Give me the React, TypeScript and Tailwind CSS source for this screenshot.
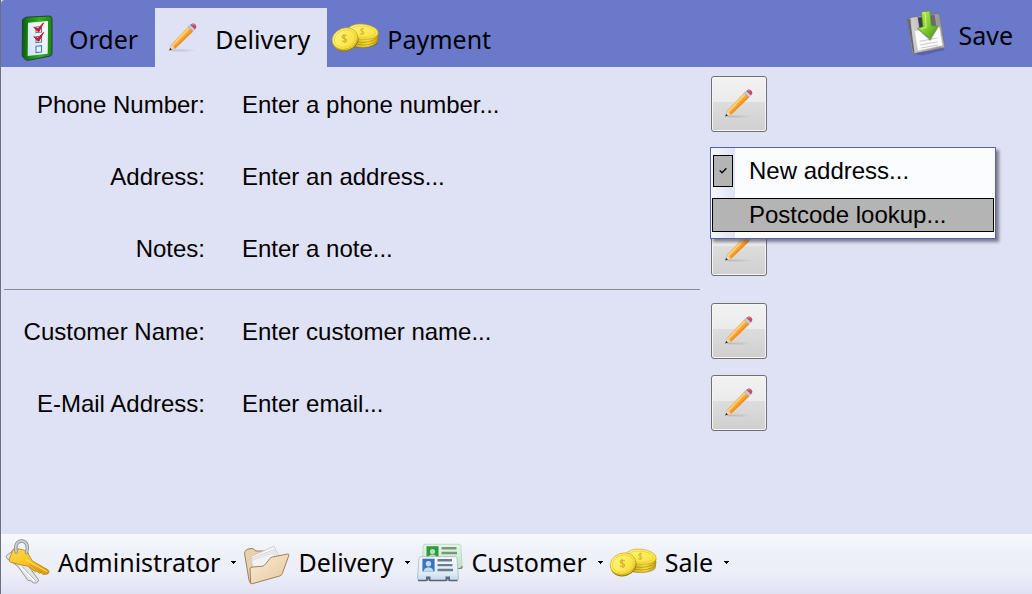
import type { ReactNode } from 'react';

function OrderIcon() {
  return (
    <svg viewBox="0 0 48 48" className="size-12 shrink-0" aria-hidden="true">
      <defs>
        <linearGradient id="order-frame" x1="0" y1="0" x2="1" y2="0">
          <stop offset="0" stopColor="#0c5c0a" />
          <stop offset="0.2" stopColor="#13870f" />
          <stop offset="0.6" stopColor="#2fb313" />
          <stop offset="1" stopColor="#178a10" />
        </linearGradient>
        <linearGradient id="order-page" x1="0" y1="1" x2="1" y2="0">
          <stop offset="0" stopColor="#cfe0f5" />
          <stop offset="1" stopColor="#ffffff" />
        </linearGradient>
      </defs>
      <path d="M9.5 5.5 L13 3.2 L36.5 2 Q39 2.2 39 5 V39.5 Q39 41.8 36.5 42.2 L15 46.3 Q13.5 46.5 12.3 45.4 L9.8 43 Q9.2 42.3 9.2 41 Z" fill="url(#order-frame)" stroke="#33374a" strokeWidth="1" />
      <path d="M15 8.7 L35 7 L34.7 39.7 L14.7 42 Z" fill="url(#order-page)" />
      <g fill="#e8f1fc" stroke="#4f7dc2" strokeWidth="1.1">
        <path d="M23 13 L28.5 12.5 V18 L23 18.7 Z" />
        <path d="M23 22.8 L28.5 22.2 V28 L23 28.6 Z" />
        <path d="M23 32.2 L28.5 31.6 V38 L23 38.6 Z" />
      </g>
      <g fill="#d01822" stroke="#d01822" strokeWidth="1" strokeLinejoin="round">
        <path d="M20.8 13.2 L25 14.8 L30.6 8.8 L26 17.6 L25 17.6 Z" />
        <path d="M20.8 22.7 L25 24.3 L30.6 18.2 L26 27 L25 27 Z" />
      </g>
    </svg>
  );
}

function PencilIcon() {
  return (
    <svg viewBox="0 0 48 48" className="size-12 shrink-0" aria-hidden="true">
      <defs>
        <linearGradient id="pencil-shade" x1="0" y1="0" x2="1" y2="0">
          <stop offset="0" stopColor="#777" stopOpacity="0.35" />
          <stop offset="1" stopColor="#777" stopOpacity="0" />
        </linearGradient>
      </defs>
      <ellipse cx="25" cy="36.5" rx="13" ry="1.2" fill="url(#pencil-shade)" />
      <path d="M10.3 36.4 L12.3 30.8 L16.2 34.5 Z" fill="#f0d9b6" stroke="#bb9c74" strokeWidth="0.4" />
      <path d="M10.2 36.5 L11.2 33.9 L13 35.4 Z" fill="#2b2622" />
      <path d="M12.3 30.8 L29.6 12.6 L31.7 14.5 L14 32.6 Z" fill="#ffd073" />
      <path d="M14 32.3 L31.3 14.2 L34.3 17.1 L16.2 34.5 Z" fill="#fba42f" />
      <path d="M15.5 33.9 L33.5 16.5" stroke="#f08d1b" strokeWidth="1.2" />
      <path d="M12.3 30.8 L29.6 12.6 M16.2 34.5 L34.3 17.1" stroke="#d98e36" strokeWidth="0.5" />
      <path d="M29.4 13 L31.7 10.8 L36 15.1 L33.8 17.3 Z" fill="#b4c3d6" stroke="#8b9bb2" strokeWidth="0.5" />
      <path d="M30.6 12.2 L34.8 16.3" stroke="#dfe8f2" strokeWidth="0.8" />
      <path d="M31.8 10.9 Q33.8 8.6 36.1 10.5 Q38.2 12.8 36 15 Z" fill="#cc4a60" stroke="#b0455a" strokeWidth="0.5" />
      <path d="M33 10.7 Q34.5 9.8 35.6 11" fill="none" stroke="#eb8795" strokeWidth="1" />
    </svg>
  );
}

function CoinsIcon() {
  return (
    <svg viewBox="0 0 48 48" className="size-12 shrink-0" aria-hidden="true">
      <defs>
        <linearGradient id="coin-face" x1="0" y1="0" x2="1" y2="1">
          <stop offset="0" stopColor="#fff68c" />
          <stop offset="0.6" stopColor="#fce84f" />
          <stop offset="1" stopColor="#f1d534" />
        </linearGradient>
        <linearGradient id="coin-edge" x1="0" y1="0" x2="1" y2="0">
          <stop offset="0" stopColor="#b8990f" />
          <stop offset="0.65" stopColor="#f8e03c" />
          <stop offset="1" stopColor="#cbaa14" />
        </linearGradient>
      </defs>
      <ellipse cx="31.5" cy="28.6" rx="15.5" ry="5.5" fill="#4b4a3a" opacity="0.3" />
      <g fill="url(#coin-edge)" stroke="#9c800c" strokeWidth="0.6">
        <ellipse cx="31.5" cy="26" rx="15.3" ry="7.4" />
        <ellipse cx="32.5" cy="23.4" rx="14.6" ry="7.6" />
        <ellipse cx="32" cy="20.6" rx="15" ry="7.8" />
      </g>
      <g transform="rotate(6 32 17.7)">
        <ellipse cx="32" cy="17.7" rx="15.3" ry="7.6" fill="url(#coin-face)" stroke="#bfa118" strokeWidth="0.6" />
        <ellipse cx="32" cy="17.7" rx="12.5" ry="5.6" fill="none" stroke="#e6ca3c" strokeWidth="0.7" />
      </g>
      <path d="M33 14.8 Q29.8 13.8 29.5 16 Q30 17.4 31.8 17.5 Q34 18.3 32.4 19.8 Q31 20.5 28.7 19.7 M31.2 13.7 V21" fill="none" stroke="#d6b530" strokeWidth="1" />
      <g transform="rotate(-20 14 25)">
        <ellipse cx="14.1" cy="26.7" rx="13" ry="10.5" fill="#937708" />
        <ellipse cx="14" cy="25.8" rx="13" ry="10.5" fill="url(#coin-edge)" />
        <ellipse cx="14" cy="24.6" rx="13" ry="10.4" fill="url(#coin-face)" stroke="#bfa118" strokeWidth="0.6" />
        <ellipse cx="14" cy="24.6" rx="10.8" ry="8.4" fill="none" stroke="#e6ca3c" strokeWidth="0.7" />
      </g>
      <path d="M15.8 21.8 Q12.3 20 11.3 22.4 Q11.4 24.3 13.8 24.6 Q16.4 25.5 15.3 27.2 Q13.8 28.3 11.2 26.9 M12.8 20 L14.3 29" fill="none" stroke="#d6b530" strokeWidth="1.2" />
    </svg>
  );
}

function SaveIcon() {
  return (
    <svg viewBox="0 0 48 48" className="size-12 shrink-0" aria-hidden="true">
      <defs>
        <linearGradient id="disk-body" x1="0" y1="0" x2="1" y2="0">
          <stop offset="0" stopColor="#6d6d72" />
          <stop offset="0.12" stopColor="#d0d0d3" />
          <stop offset="0.85" stopColor="#96969b" />
          <stop offset="1" stopColor="#b4b4b6" />
        </linearGradient>
        <linearGradient id="disk-arrow" x1="0" y1="0" x2="1" y2="1">
          <stop offset="0" stopColor="#c3ee5a" />
          <stop offset="0.5" stopColor="#86d02f" />
          <stop offset="1" stopColor="#3f9112" />
        </linearGradient>
      </defs>
      <path d="M9 44 L42 39 L42.5 41 L20 46.5 Z" fill="#2c3370" opacity="0.3" />
      <path d="M5.5 10.3 Q5.7 9 7.3 8.7 L35.5 4.4 Q37.3 4.3 37.8 6 L42.7 37.2 Q42.7 38.6 41.4 39 L12.2 44.5 Q10.6 44.6 10.1 43 Z" fill="url(#disk-body)" stroke="#69696f" strokeWidth="0.6" />
      <path d="M6 11 L8 9.2 L12.5 43.7 L10.8 43.7 Z" fill="#66666c" />
      <path d="M15.5 8.3 L32.5 5.7 L34.3 17 L17.2 19.5 Z" fill="#6a6b71" />
      <path d="M16.3 9 L20.2 8.4 L21.5 18 L17.7 18.5 Z" fill="#3d3e43" />
      <path d="M12.5 21.7 L37.6 18 L40.6 36.6 L15.6 41.9 Z" fill="#fcfcfc" stroke="#c8c8cb" strokeWidth="0.5" />
      <path d="M17.5 32.3 L35.2 29.1 M18 36 L35.7 32.8 M18.8 39 L36.3 36" stroke="#bcbcc0" strokeWidth="0.8" />
      <path d="M16 20.5 L28.3 32 L36 19 Z" fill="#555" opacity="0.55" />
      <path d="M19.5 3 L27.8 2 L29.3 16.8 L36.2 17.2 L28 29.5 L15.5 19.5 L21 17.8 Z" fill="url(#disk-arrow)" stroke="#4f9a22" strokeWidth="0.6" />
      <path d="M20.8 4 L23 3.7 L24.2 18.4 L18.8 19.8" fill="none" stroke="#d8f68a" strokeWidth="0.9" />
    </svg>
  );
}

function KeysIcon() {
  return (
    <svg viewBox="0 0 48 48" className="size-12 shrink-0" aria-hidden="true">
      <defs>
        <linearGradient id="key-gold" x1="0" y1="0" x2="1" y2="1">
          <stop offset="0" stopColor="#ffd84e" />
          <stop offset="0.5" stopColor="#f9c324" />
          <stop offset="1" stopColor="#dc9510" />
        </linearGradient>
      </defs>
      <path d="M12 11 L4.5 16.5 Q3.5 18 5 19.5 L16 27.5 L25.8 41.4 L29.5 42 L31.3 44 L35 43.8 L36.7 41.2 L28 29 L20 20 Z" fill="#e3e4e7" stroke="#8d8f95" strokeWidth="0.9" />
      <path d="M18 27 L32.5 42" stroke="#fff" strokeWidth="1.3" />
      <path d="M20 27.5 L34 42" stroke="#a6a8ad" strokeWidth="0.8" />
      <path d="M11 10.3 Q17 8.7 25.5 12.5 Q27.5 18.5 30.5 22 L45.5 30.6 Q47.4 31.7 46.9 33.3 Q46.5 35 44.5 35.2 L41 35.3 L39.2 33.7 L37.5 34.2 L35 32.3 L33.4 32.7 L26.2 27.2 Q18 26 8.7 23.3 Q6.7 22.5 7.3 20.3 Z" fill="url(#key-gold)" stroke="#b57c10" strokeWidth="0.8" />
      <path d="M23.5 20.5 L45 32.7" stroke="#ffe68a" strokeWidth="0.9" />
      <path d="M27.5 25.5 L40 33" stroke="#c98912" strokeWidth="0.8" />
      <path d="M14.2 13 C12.5 6 15.5 1.8 20 2 C25 2.4 26.5 8 24.5 13.5" fill="none" stroke="#85898e" strokeWidth="3.4" strokeLinecap="round" />
      <path d="M14.2 13 C12.5 6 15.5 1.8 20 2 C25 2.4 26.5 8 24.5 13.5" fill="none" stroke="#c9ccd0" strokeWidth="1.9" strokeLinecap="round" />
    </svg>
  );
}

function FolderIcon() {
  return (
    <svg viewBox="0 0 48 48" className="size-12 shrink-0" aria-hidden="true">
      <defs>
        <linearGradient id="folder-front" x1="0" y1="0" x2="1" y2="1">
          <stop offset="0" stopColor="#fbecd6" />
          <stop offset="1" stopColor="#e7c79d" />
        </linearGradient>
      </defs>
      <path d="M2.5 14.3 Q2.6 12.5 4.5 10.7 Q6.5 9.5 10.8 9.5 L14 12 L28 12 L35 22 L8.8 44.5 Q7.2 43 6.8 40 Z" fill="#ecd0ac" stroke="#8f755b" strokeWidth="0.9" />
      <path d="M9 17.5 L31.8 7.3 L38.3 19 L30 30 L11 35 Z" fill="#f8f8f8" stroke="#b9bcc0" strokeWidth="0.7" />
      <path d="M9.2 19.3 L32.2 10.6 L36.8 22 L12 36 Z" fill="#ececee" stroke="#c6c8cb" strokeWidth="0.6" />
      <path d="M9.6 21.5 L31 14 L35 24 L12.5 36 Z" fill="#f1f2f3" stroke="#d2d3d6" strokeWidth="0.6" />
      <path d="M8 30 Q8 28.3 10 28.1 L20.6 27.2 Q22.3 26.8 23.5 25 L27.8 19.7 Q28.8 18.4 30.5 18 L45.5 15 Q47.4 14.8 46.8 16.5 L40.2 34.8 Q39.6 36.3 38 36.9 L10.3 44.7 Q8.7 45 8.6 43.3 Z" fill="url(#folder-front)" stroke="#8f755b" strokeWidth="0.9" />
    </svg>
  );
}

function CardsIcon() {
  return (
    <svg viewBox="0 0 48 48" className="size-12 shrink-0" aria-hidden="true">
      <defs>
        <linearGradient id="card-green" x1="0" y1="0" x2="0" y2="1">
          <stop offset="0" stopColor="#e6f7e4" />
          <stop offset="1" stopColor="#c0e3c2" />
        </linearGradient>
        <linearGradient id="card-blue" x1="0" y1="0" x2="0" y2="1">
          <stop offset="0" stopColor="#f6fafd" />
          <stop offset="0.7" stopColor="#dfebf5" />
          <stop offset="1" stopColor="#c5d6e6" />
        </linearGradient>
      </defs>
      <path d="M9 5.3 H43 Q44.6 5.3 44.8 7 L46 27 Q46 29.2 44 29.2 H8 Q6 29 6 27 L7.2 7 Q7.4 5.3 9 5.3 Z" fill="url(#card-green)" stroke="#b4d6b8" strokeWidth="0.8" />
      <path d="M41 29.5 H44 Q46.3 29.3 46.1 27" fill="none" stroke="#6f8574" strokeWidth="1.2" />
      <rect x="10.5" y="7.2" width="12" height="12" fill="#2e9a41" />
      <circle cx="16.5" cy="12.6" r="2.6" fill="#b5dfb4" />
      <path d="M12 19 Q12.5 15.8 16.5 15.6 Q20.5 15.8 21 19 Z" fill="#b5dfb4" />
      <path d="M25.5 9.2 H40.5 M25.5 14 H41" stroke="#7b967e" strokeWidth="2.4" />
      <path d="M5 17.7 H39 Q40.8 17.7 41 19.5 L42.5 39.5 Q42.5 41.5 40.3 41.5 H3.5 Q1.3 41.4 1.5 39.5 L3 19.5 Q3.2 17.7 5 17.7 Z" fill="url(#card-blue)" stroke="#a4b6c8" strokeWidth="0.8" />
      <path d="M2 41.5 H10.5 M14 41.5 H30 M33.5 41.5 H41.5" stroke="#52667c" strokeWidth="1.3" />
      <path d="M10 37.6 H14.5 V42 H13 L12.2 39.8 L11.3 42 H10 Z M29.5 37.6 H34 V42 H32.7 L31.8 39.8 L31 42 H29.5 Z" fill="#56697e" />
      <rect x="6.4" y="19.7" width="12.2" height="12.8" fill="#3b74bd" />
      <circle cx="12.5" cy="24.8" r="2.7" fill="#c1dbf3" />
      <path d="M7.5 32.4 Q8 28.7 12.5 28.3 Q17 28.7 17.5 32.4 Z" fill="#c1dbf3" />
      <path d="M21.5 21.2 H36 M21.5 26.1 H36.5 M21.5 31 H37" stroke="#6b7d92" strokeWidth="2.4" />
    </svg>
  );
}

function EditButton({ label, expanded }: { label: string; expanded?: boolean }) {
  return (
    <button
      type="button"
      aria-label={label}
      aria-expanded={expanded}
      className="flex size-14 items-center justify-center rounded-[3px] border border-[#707070] bg-[linear-gradient(to_bottom,#f2f2f2_0%,#ebebeb_46%,#dddddd_47%,#cfcfcf_100%)] shadow-[inset_0_0_0_1px_#f6f6f6]"
    >
      <PencilIcon />
    </button>
  );
}

function AddressMenu() {
  return (
    <div
      role="menu"
      className="absolute -top-px -left-px z-10 flex w-[286px] flex-col gap-2.5 border border-[#5562a8] bg-[linear-gradient(to_right,#fafcff_1px,#f5f6fd_1px,#dfe2f5_24px,#fafcff_24px)] px-px py-1.5 shadow-[3px_3px_3px_rgba(60,60,80,0.6)]"
    >
      <button type="button" role="menuitemcheckbox" aria-checked="true" className="flex h-[34px] items-center gap-4 px-px text-left">
        <span className="flex h-8 w-5 items-center justify-center border border-black bg-[#b4b4b4]">
          <svg viewBox="0 0 8 8" className="size-2" aria-hidden="true">
            <path d="M0.7 3.4 L3 5.8 L7.4 1.2" fill="none" stroke="#000" strokeWidth="1.3" />
          </svg>
        </span>
        New address...
      </button>
      <button type="button" role="menuitem" className="h-[34px] border border-black bg-[#b4b4b4] pl-9 text-left">
        Postcode lookup...
      </button>
    </div>
  );
}

function FieldRow({ label, value, children }: { label: string; value: string; children: ReactNode }) {
  return (
    <div className="flex items-center">
      <span className="w-51 shrink-0 pt-0.5 text-right">{label}</span>
      <span className="ml-[37px] w-[469px] shrink-0 pt-0.5 pr-2">{value}</span>
      <div className="relative">{children}</div>
    </div>
  );
}

function Tab({ label, icon, selected }: { label: string; icon: ReactNode; selected?: boolean }) {
  return (
    <button
      type="button"
      role="tab"
      aria-selected={selected ?? false}
      className="flex items-center gap-2 pr-[17px] pl-1 aria-selected:bg-[#dfe1f4]"
    >
      {icon}
      <span className="pt-0.5">{label}</span>
    </button>
  );
}

function StatusItem({ label, icon }: { label: string; icon: ReactNode }) {
  return (
    <button type="button" aria-haspopup="menu" className="flex items-center">
      {icon}
      <span className="ml-2 pb-0.5">{label}</span>
      <svg viewBox="0 0 5 3" className="mb-0.5 ml-[11px] h-[3px] w-[5px]" shapeRendering="crispEdges" aria-hidden="true">
        <path d="M0 0 H5 V1 H4 V2 H3 V3 H2 V2 H1 V1 H0 Z" fill="#000" />
      </svg>
    </button>
  );
}

export default function App() {
  return (
    <div className="flex min-h-screen flex-col border-l border-[#6b7080] bg-[#dfe1f4] font-['Liberation_Sans',Arial,sans-serif] text-2xl leading-7 text-black">
      <header className="flex h-[67px] items-stretch justify-between rounded-tl-sm bg-[#6b79cb] font-['Noto_Sans','Segoe_UI',sans-serif] text-[25px]">
        <div role="tablist" className="flex pt-2 pl-2">
          <Tab label="Order" icon={<OrderIcon />} />
          <Tab label="Delivery" icon={<PencilIcon />} selected />
          <Tab label="Payment" icon={<CoinsIcon />} />
        </div>
        <button type="button" className="flex h-[66px] items-center gap-2 pr-[19px]">
          <SaveIcon />
          <span className="pt-1">Save</span>
        </button>
      </header>

      <main className="flex flex-1 flex-col pt-[9px]">
        <section className="flex flex-col gap-4">
          <FieldRow label="Phone Number:" value="Enter a phone number...">
            <EditButton label="Edit phone number" />
          </FieldRow>
          <FieldRow label="Address:" value="Enter an address...">
            <EditButton label="Edit address" expanded />
            <AddressMenu />
          </FieldRow>
          <FieldRow label="Notes:" value="Enter a note...">
            <EditButton label="Edit notes" />
          </FieldRow>
        </section>
        <hr className="mt-[13px] mb-[13px] ml-[3px] w-[696px] border-[#8a8c96]" />
        <section className="flex flex-col gap-4">
          <FieldRow label="Customer Name:" value="Enter customer name...">
            <EditButton label="Edit customer name" />
          </FieldRow>
          <FieldRow label="E-Mail Address:" value="Enter email...">
            <EditButton label="Edit email address" />
          </FieldRow>
        </section>
      </main>

      <footer className="flex h-15 items-center gap-1.5 bg-[linear-gradient(to_bottom,#f8f9fd_0%,#eff1f9_30%,#eceef8_65%,#e0e2f4_100%)] pb-0.5 pl-px font-['Noto_Sans','Segoe_UI',sans-serif] text-[25px]">
        <StatusItem label="Administrator" icon={<KeysIcon />} />
        <StatusItem label="Delivery" icon={<FolderIcon />} />
        <StatusItem label="Customer" icon={<CardsIcon />} />
        <StatusItem label="Sale" icon={<CoinsIcon />} />
      </footer>
    </div>
  );
}
